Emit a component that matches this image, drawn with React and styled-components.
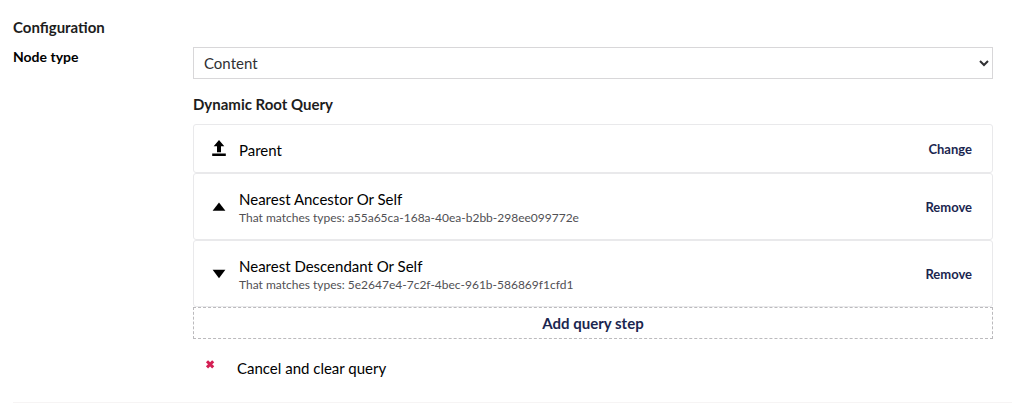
import React from "react";
import styled, { createGlobalStyle } from "styled-components";

const GlobalStyle = createGlobalStyle`
  *, *::before, *::after { box-sizing: border-box; }
  body {
    margin: 0;
    background: #fff;
    color: #000;
    font-family: Lato, "Liberation Sans", sans-serif;
    font-size: 15px;
    line-height: 20px;
  }
  button, select { font: inherit; color: inherit; }
`;

const Page = styled.main`
  padding: 17px 0 0 13px;
`;

const Section = styled.section`
  padding-bottom: 20px;
  border-bottom: 1px solid #f6f4f4;
`;

const Heading = styled.h2`
  margin: 0;
  font-size: 15px;
  font-weight: 700;
  line-height: 20px;
  color: #1d1d1d;
`;

const Field = styled.div`
  display: flex;
  align-items: flex-start;
  padding: 10px 19px 0 0;
`;

const Label = styled.label`
  flex: 0 0 180px;
  font-size: 14px;
  font-weight: 700;
`;

const Controls = styled.div`
  flex: 1;
  min-width: 0;
`;

const Select = styled.select`
  display: block;
  width: 100%;
  height: 32px;
  margin-bottom: 15px;
  padding: 0 0 0 6px;
  border: 1px solid #d8d7d9;
  border-radius: 0;
  background: #fff;
  color: #303033;
`;

const Steps = styled.ul`
  margin: 10px 0 0;
  padding: 0;
  list-style: none;
`;

const Step = styled.li`
  display: flex;
  align-items: center;
  padding: 13px 20px 12px 18px;
  border: 1px solid #e9e9eb;
  border-radius: 3px;
`;

const StepIcon = styled.svg`
  flex: none;
  width: 14px;
  height: 20px;
  margin-right: 13px;
`;

const StepText = styled.div`
  flex: 1;
  min-width: 0;
  padding-top: 2px;
`;

const Detail = styled.div`
  padding-bottom: 1px;
  font-size: 12px;
  line-height: 17px;
  color: #515054;
`;

const ActionButton = styled.button`
  padding: 0;
  border: 0;
  background: none;
  font-size: 13px;
  font-weight: 700;
  color: #1b264f;
  cursor: pointer;
`;

const AddButton = styled.button`
  display: block;
  width: 100%;
  height: 32px;
  padding: 0;
  border: 1px dashed #bbbabd;
  background: #fff;
  font-weight: 700;
  color: #1b264f;
  cursor: pointer;
`;

const CancelButton = styled.button`
  display: flex;
  margin-top: 19px;
  padding: 0 0 4px 12px;
  border: 0;
  background: none;
  cursor: pointer;
`;

const CancelIcon = styled.svg`
  width: 10px;
  height: 12px;
  margin-right: 22px;
`;

const shapes = {
  parent: "M7 1L12.3 7.2H9V13.2H5V7.2H1.7ZM0.2 14.4H13.8V17H0.2Z",
  ancestor: "M7 5.4L13.4 13.8H0.6Z",
  descendant: "M0.6 5.8H13.4L7 14.2Z",
};

const steps = [
  { shape: "parent", name: "Parent", action: "Change" },
  {
    shape: "ancestor",
    name: "Nearest Ancestor Or Self",
    detail: "That matches types: a55a65ca-168a-40ea-b2bb-298ee099772e",
    action: "Remove",
  },
  {
    shape: "descendant",
    name: "Nearest Descendant Or Self",
    detail: "That matches types: 5e2647e4-7c2f-4bec-961b-586869f1cfd1",
    action: "Remove",
  },
];

export default function App() {
  return (
    <>
      <GlobalStyle />
      <Page>
        <Section>
          <Heading>Configuration</Heading>
          <Field>
            <Label htmlFor="node-type">Node type</Label>
            <Controls>
              <Select id="node-type" defaultValue="content">
                <option value="content">Content</option>
              </Select>
              <Heading as="h3">Dynamic Root Query</Heading>
              <Steps>
                {steps.map((step) => (
                  <Step key={step.name}>
                    <StepIcon viewBox="0 0 14 20" aria-hidden="true">
                      <path d={shapes[step.shape]} />
                    </StepIcon>
                    <StepText>
                      <div>{step.name}</div>
                      {step.detail && <Detail>{step.detail}</Detail>}
                    </StepText>
                    <ActionButton type="button">{step.action}</ActionButton>
                  </Step>
                ))}
              </Steps>
              <AddButton type="button">Add query step</AddButton>
              <CancelButton type="button">
                <CancelIcon viewBox="0 0 10 12" aria-hidden="true">
                  <path
                    d="M2 3.2L8.2 9.4M8.2 3.2L2 9.4"
                    stroke="#d42054"
                    strokeWidth="3"
                  />
                </CancelIcon>
                Cancel and clear query
              </CancelButton>
            </Controls>
          </Field>
        </Section>
      </Page>
    </>
  );
}
